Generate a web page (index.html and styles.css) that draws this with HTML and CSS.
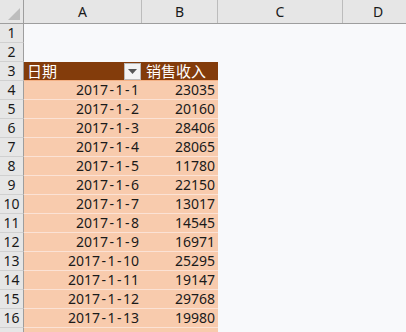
FILE: index.html
```html
<!DOCTYPE html>
<html>
<head>
<meta charset="utf-8">
<link rel="stylesheet" href="styles.css">
</head>
<body>
<div class="sheet">
  <div class="row colhead">
    <div class="rh corner"><svg width="12" height="12" viewBox="0 0 12 12"><polygon points="12,0 12,12 0,12" fill="#bdbdbd"/></svg></div>
    <div class="c a ch">A</div>
    <div class="c b ch">B</div>
    <div class="c cc ch">C</div>
    <div class="c d ch">D</div>
  </div>
  <div class="row"><div class="rh">1</div><div class="c a"></div><div class="c b"></div><div class="c cc"></div><div class="c d"></div></div>
  <div class="row"><div class="rh">2</div><div class="c a"></div><div class="c b"></div><div class="c cc"></div><div class="c d"></div></div>
  <div class="row"><div class="rh">3</div>
    <div class="c a th"><span class="thl">日期</span><span class="dd"><svg width="9" height="5" viewBox="0 0 9 5"><polygon points="0,0 9,0 4.5,5" fill="#555"/></svg></span></div>
    <div class="c b th thr">销售收入</div>
    <div class="c cc"></div><div class="c d"></div>
  </div>
  <div class="row"><div class="rh">4</div><div class="c a td">2017<span class="h">-</span>1<span class="h">-</span>1</div><div class="c b td">23035</div><div class="c cc"></div><div class="c d"></div></div>
  <div class="row"><div class="rh">5</div><div class="c a td">2017<span class="h">-</span>1<span class="h">-</span>2</div><div class="c b td">20160</div><div class="c cc"></div><div class="c d"></div></div>
  <div class="row"><div class="rh">6</div><div class="c a td">2017<span class="h">-</span>1<span class="h">-</span>3</div><div class="c b td">28406</div><div class="c cc"></div><div class="c d"></div></div>
  <div class="row"><div class="rh">7</div><div class="c a td">2017<span class="h">-</span>1<span class="h">-</span>4</div><div class="c b td">28065</div><div class="c cc"></div><div class="c d"></div></div>
  <div class="row"><div class="rh">8</div><div class="c a td">2017<span class="h">-</span>1<span class="h">-</span>5</div><div class="c b td">11780</div><div class="c cc"></div><div class="c d"></div></div>
  <div class="row"><div class="rh">9</div><div class="c a td">2017<span class="h">-</span>1<span class="h">-</span>6</div><div class="c b td">22150</div><div class="c cc"></div><div class="c d"></div></div>
  <div class="row"><div class="rh">10</div><div class="c a td">2017<span class="h">-</span>1<span class="h">-</span>7</div><div class="c b td">13017</div><div class="c cc"></div><div class="c d"></div></div>
  <div class="row"><div class="rh">11</div><div class="c a td">2017<span class="h">-</span>1<span class="h">-</span>8</div><div class="c b td">14545</div><div class="c cc"></div><div class="c d"></div></div>
  <div class="row"><div class="rh">12</div><div class="c a td">2017<span class="h">-</span>1<span class="h">-</span>9</div><div class="c b td">16971</div><div class="c cc"></div><div class="c d"></div></div>
  <div class="row"><div class="rh">13</div><div class="c a td">2017<span class="h">-</span>1<span class="h">-</span>10</div><div class="c b td">25295</div><div class="c cc"></div><div class="c d"></div></div>
  <div class="row"><div class="rh">14</div><div class="c a td">2017<span class="h">-</span>1<span class="h">-</span>11</div><div class="c b td">19147</div><div class="c cc"></div><div class="c d"></div></div>
  <div class="row"><div class="rh">15</div><div class="c a td">2017<span class="h">-</span>1<span class="h">-</span>12</div><div class="c b td">29768</div><div class="c cc"></div><div class="c d"></div></div>
  <div class="row"><div class="rh">16</div><div class="c a td">2017<span class="h">-</span>1<span class="h">-</span>13</div><div class="c b td">19980</div><div class="c cc"></div><div class="c d"></div></div>
  <div class="row"><div class="rh"></div><div class="c a td"></div><div class="c b td"></div><div class="c cc"></div><div class="c d"></div></div>
</div>
</body>
</html>
```
FILE: styles.css
```css
* { box-sizing: border-box; }
html, body { margin: 0; padding: 0; }
body {
  width: 406px;
  height: 332px;
  overflow: hidden;
  background: #f8f9fb;
  font-family: "Noto Sans", "Noto Sans CJK SC", sans-serif;
  font-size: 14px;
  color: #1a1a1a;
}
.sheet { display: flex; flex-direction: column; }
.row { display: flex; height: 19px; flex: none; }
.colhead { height: 24px; background: #e6e6e6; border-bottom: 1px solid #9e9e9e; }
.rh {
  width: 24px; flex: none;
  background: #e6e6e6;
  border-right: 1px solid #9e9e9e;
  border-bottom: 1px solid #d0d0d0;
  display: flex; align-items: center; justify-content: center;
  font-size: 14px; line-height: 1; color: #1a1a1a;
}
.colhead .rh { border-bottom: none; }
.corner { justify-content: flex-end; align-items: flex-end; padding: 0 3px 3px 0; }
.c { flex: none; display: flex; align-items: center; white-space: nowrap; line-height: 1; }
.a { width: 118px; }
.b { width: 76px; }
.cc { width: 125px; }
.d { width: 70px; }
.ch { justify-content: center; border-right: 1px solid #bcbcbc; height: 23px; padding-top: 1px; }
.ch.d { border-right: none; }
.th { background: #833c0b; color: #fff; border-bottom: 1px solid #f4b084; font-size: 15px; }
.thl { padding-left: 3px; flex: 1; }
.dd {
  width: 17px; height: 17px; margin-right: 1px;
  background: #f3f3f3; border: 1px solid #b9b9b9;
  display: flex; align-items: center; justify-content: center;
}
.thr { padding-left: 4px; }
.td {
  background: #f8cbad;
  border-bottom: 1px solid #fbe2d5;
  justify-content: flex-end;
  padding-right: 3px;
}
.h { padding: 0 1.5px; }
```
